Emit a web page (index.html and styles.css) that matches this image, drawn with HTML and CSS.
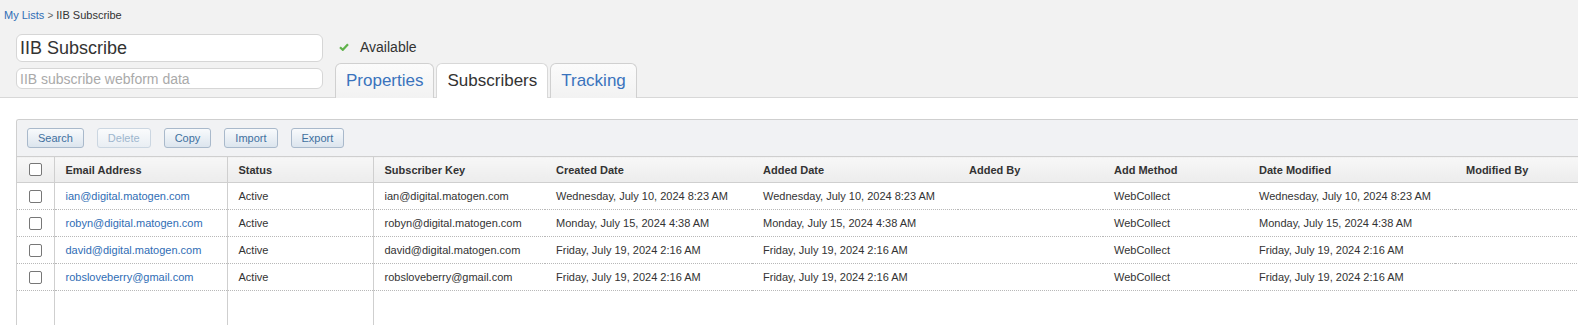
FILE: index.html
```html
<!DOCTYPE html>
<html lang="en">
<head>
    <meta charset="UTF-8">
    <title>IIB Subscribe</title>
    <link rel="stylesheet" href="styles.css">
</head>
<body>

    <div class="top">
        <div class="crumbs">
            <a href="#">My Lists</a> <span class="sep">&gt;</span> <span class="here">IIB Subscribe</span>
        </div>
        <div class="head">
            <div class="fields">
                <input class="name" type="text" value="IIB Subscribe">
                <input class="desc" type="text" placeholder="IIB subscribe webform data">
            </div>
            <div class="side">
                <div class="status">
                    <svg width="10" height="8" viewBox="0 0 10 8"><polyline points="1,4.2 3.8,6.8 9,1.2" fill="none" stroke="#5fb24a" stroke-width="2.2"/></svg>
                    <span>Available</span>
                </div>
                <div class="tabs">
                    <a class="tab" href="#">Properties</a>
                    <a class="tab active" href="#">Subscribers</a>
                    <a class="tab" href="#">Tracking</a>
                </div>
            </div>
        </div>
    </div>

    <div class="content">
        <div class="panel">
            <div class="toolbar">
                <button>Search</button>
                <button disabled>Delete</button>
                <button>Copy</button>
                <button>Import</button>
                <button>Export</button>
            </div>
            <table class="grid">
                <colgroup>
                    <col style="width:37px">
                    <col style="width:173px">
                    <col style="width:146px">
                    <col style="width:172px">
                    <col style="width:207px">
                    <col style="width:206px">
                    <col style="width:145px">
                    <col style="width:145px">
                    <col style="width:207px">
                    <col style="width:200px">
                </colgroup>
                <thead>
                    <tr>
                        <th class="chk"><span class="cb"></span></th>
                        <th class="div">Email Address</th>
                        <th class="div">Status</th>
                        <th class="div">Subscriber Key</th>
                        <th>Created Date</th>
                        <th>Added Date</th>
                        <th>Added By</th>
                        <th>Add Method</th>
                        <th>Date Modified</th>
                        <th>Modified By</th>
                    </tr>
                </thead>
                <tbody>
                    <tr>
                        <td class="chk"><span class="cb"></span></td>
                        <td class="div"><a href="#">ian@digital.matogen.com</a></td>
                        <td class="div">Active</td>
                        <td class="div">ian@digital.matogen.com</td>
                        <td>Wednesday, July 10, 2024 8:23 AM</td>
                        <td>Wednesday, July 10, 2024 8:23 AM</td>
                        <td></td>
                        <td>WebCollect</td>
                        <td>Wednesday, July 10, 2024 8:23 AM</td>
                        <td></td>
                    </tr>
                    <tr>
                        <td class="chk"><span class="cb"></span></td>
                        <td class="div"><a href="#">robyn@digital.matogen.com</a></td>
                        <td class="div">Active</td>
                        <td class="div">robyn@digital.matogen.com</td>
                        <td>Monday, July 15, 2024 4:38 AM</td>
                        <td>Monday, July 15, 2024 4:38 AM</td>
                        <td></td>
                        <td>WebCollect</td>
                        <td>Monday, July 15, 2024 4:38 AM</td>
                        <td></td>
                    </tr>
                    <tr>
                        <td class="chk"><span class="cb"></span></td>
                        <td class="div"><a href="#">david@digital.matogen.com</a></td>
                        <td class="div">Active</td>
                        <td class="div">david@digital.matogen.com</td>
                        <td>Friday, July 19, 2024 2:16 AM</td>
                        <td>Friday, July 19, 2024 2:16 AM</td>
                        <td></td>
                        <td>WebCollect</td>
                        <td>Friday, July 19, 2024 2:16 AM</td>
                        <td></td>
                    </tr>
                    <tr>
                        <td class="chk"><span class="cb"></span></td>
                        <td class="div"><a href="#">robsloveberry@gmail.com</a></td>
                        <td class="div">Active</td>
                        <td class="div">robsloveberry@gmail.com</td>
                        <td>Friday, July 19, 2024 2:16 AM</td>
                        <td>Friday, July 19, 2024 2:16 AM</td>
                        <td></td>
                        <td>WebCollect</td>
                        <td>Friday, July 19, 2024 2:16 AM</td>
                        <td></td>
                    </tr>
                    <tr class="filler">
                        <td class="chk"></td>
                        <td class="div"></td>
                        <td class="div"></td>
                        <td class="div"></td>
                        <td></td><td></td><td></td><td></td><td></td><td></td>
                    </tr>
                </tbody>
            </table>
        </div>
    </div>

</body>
</html>
```

FILE: styles.css
```css
body {
    margin: 0;
    font-family: 'Liberation Sans', Arial, sans-serif;
    color: #333;
    background: white;
    overflow: hidden;
}
a {
    text-decoration: none;
}
.top {
    background: #f2f2f2;
    border-bottom: 1px solid #d8d8d8;
}
.crumbs {
    height: 34px;
    box-sizing: border-box;
    padding: 9px 0 0 4px;
    font-size: 11px;
    line-height: 13px;
}
.crumbs a {
    color: #2f6db5;
}
.crumbs .sep {
    color: #666;
    font-size: 10px;
}
.crumbs .here {
    color: #333;
}
.head {
    display: flex;
    gap: 12px;
    padding-left: 16px;
}
.fields {
    display: flex;
    flex-direction: column;
    gap: 6px;
    width: 307px;
}
.fields input {
    box-sizing: border-box;
    width: 100%;
    margin: 0;
    border: 1px solid #d6d6d6;
    border-radius: 6px;
    background: white;
    font-family: 'Liberation Sans', Arial, sans-serif;
    color: #333;
    padding: 0 3px;
    outline: none;
}
.fields .name {
    height: 28px;
    font-size: 18px;
}
.fields .desc {
    height: 21px;
    font-size: 14px;
}
.fields .desc::placeholder {
    color: #aaa;
}
.side {
    display: flex;
    flex-direction: column;
}
.status {
    height: 29px;
    display: flex;
    align-items: center;
    gap: 11px;
    padding: 0 0 3px 4px;
    box-sizing: border-box;
    font-size: 14px;
}
.tabs {
    display: flex;
    gap: 2px;
    margin-bottom: -1px;
}
.tab {
    height: 35px;
    box-sizing: border-box;
    padding: 0 10px;
    border: 1px solid #d0d0d0;
    border-bottom: none;
    border-radius: 6px 6px 0 0;
    background: linear-gradient(#fbfbfb, #f2f2f2);
    color: #3a73bd;
    font-size: 17px;
    line-height: 34px;
}
.tab.active {
    background: white;
    color: #333;
    border-color: #d8d8d8;
}
.content {
    padding: 21px 0 0 16px;
}
.panel {
    border-top: 1px solid #cfcfcf;
    border-left: 1px solid #cfcfcf;
    border-top-left-radius: 3px;
    overflow: hidden;
}
.toolbar {
    background: #f1f2f4;
    padding: 8px 0 8px 10px;
    display: flex;
    gap: 13px;
}
.toolbar button {
    height: 20px;
    padding: 0 10px;
    border: 1px solid #a9b9cb;
    border-radius: 3px;
    background: linear-gradient(#f8fafc, #dce5ee);
    color: #41709f;
    font-family: 'Liberation Sans', Arial, sans-serif;
    font-size: 11px;
    cursor: pointer;
}
.toolbar button:disabled {
    border-color: #cbd6e1;
    background: linear-gradient(#fafbfc, #e9eef3);
    color: #9eb6ce;
    cursor: default;
}
.grid {
    border-collapse: collapse;
    table-layout: fixed;
    width: 1638px;
    font-size: 11px;
}
.grid th {
    height: 25px;
    padding: 0 11px;
    text-align: left;
    font-weight: bold;
    color: #333;
    background: linear-gradient(#f7f7f7, #ececec);
    border-top: 1px solid #cfcfcf;
    border-bottom: 1px solid #cfcfcf;
}
.grid td {
    height: 26px;
    padding: 0 11px;
    border-bottom: 1px dotted #b8b8b8;
    white-space: nowrap;
    overflow: hidden;
}
.grid td a {
    color: #2f6db5;
}
.grid .div {
    border-left: 1px solid #cfcfcf;
}
.grid .chk {
    padding: 0;
    text-align: center;
}
.grid .filler td {
    height: 60px;
    border-bottom: none;
}
.cb {
    display: inline-block;
    width: 11px;
    height: 11px;
    border: 1px solid #777;
    border-radius: 2px;
    background: white;
    vertical-align: middle;
}
```
